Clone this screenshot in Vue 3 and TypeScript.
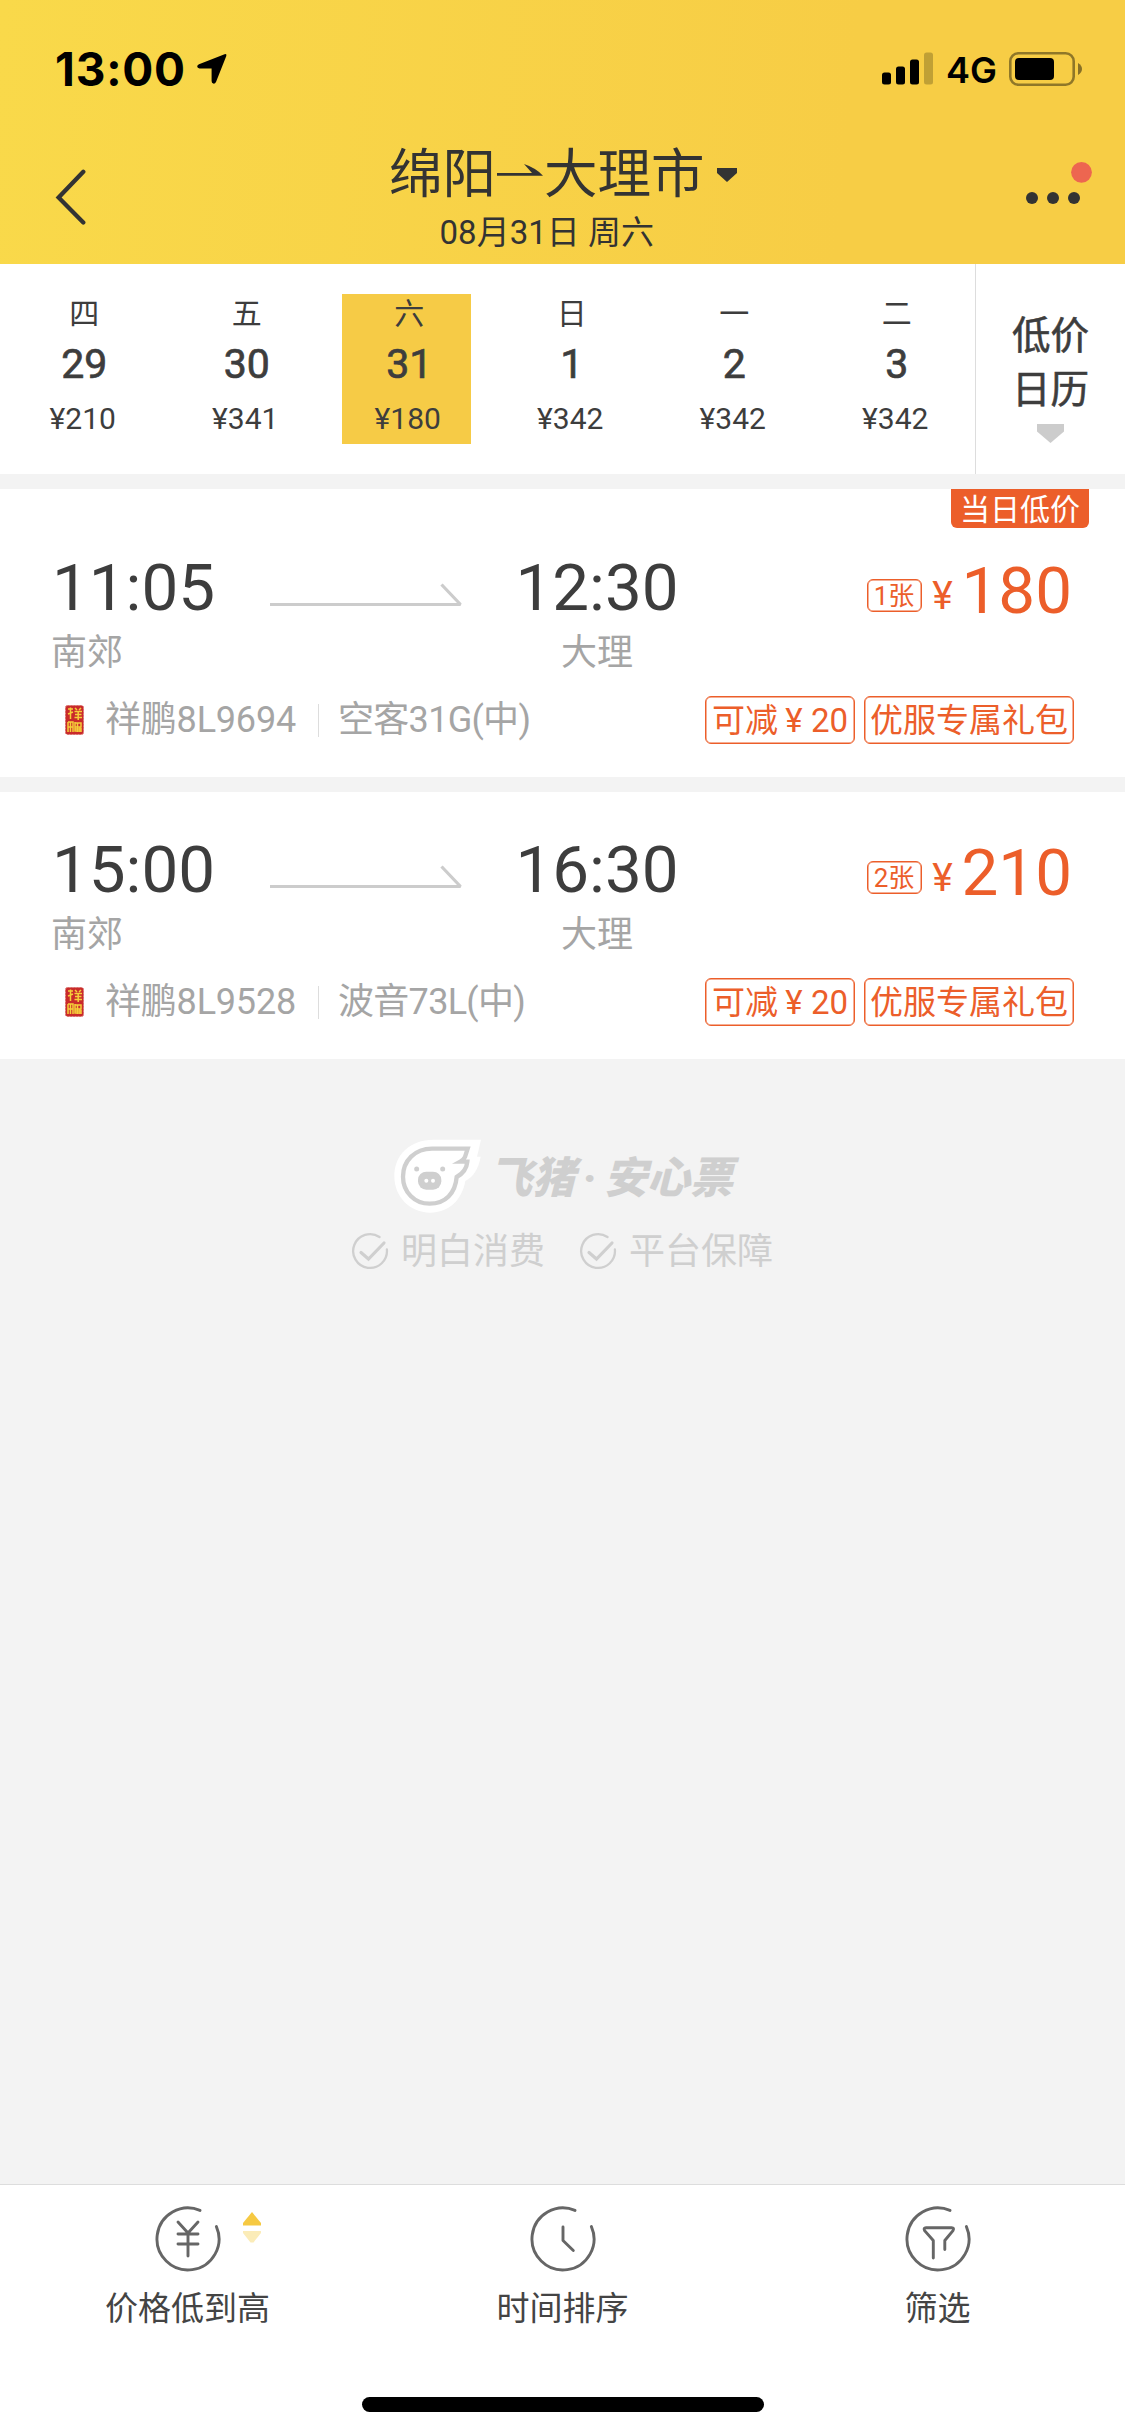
<script setup lang="ts">
interface Day {
  week: string
  date: string
  price: string
  active?: boolean
}
interface Flight {
  depart: string
  arrive: string
  from: string
  to: string
  code: string
  plane: string
  seats: string
  price: string
  badge?: string
}

const days: Day[] = [
  { week: '四', date: '29', price: '¥210' },
  { week: '五', date: '30', price: '¥341' },
  { week: '六', date: '31', price: '¥180', active: true },
  { week: '日', date: '1', price: '¥342' },
  { week: '一', date: '2', price: '¥342' },
  { week: '二', date: '3', price: '¥342' },
]

const flights: Flight[] = [
  { depart: '11:05', arrive: '12:30', from: '南郊', to: '大理', code: '祥鹏8L9694', plane: '空客31G(中)', seats: '1张', price: '180', badge: '当日低价' },
  { depart: '15:00', arrive: '16:30', from: '南郊', to: '大理', code: '祥鹏8L9528', plane: '波音73L(中)', seats: '2张', price: '210' },
]

const promises = ['明白消费', '平台保障']

const ring = 'M12 -28.6A31 31 0 1 0 28.4 -12.4'
const tabs = [
  { label: '价格低到高', glyph: 'M-10 -17L0 -6L10 -17M-10 -5H10M-10 5H10M0 -5V17', sort: true },
  { label: '时间排序', glyph: 'M0 -12V1.5L10.3 11.5', sort: false },
  { label: '筛选', glyph: 'M-4.7 19V1.5L-13.4 -8.4Q-14.8 -11.3 -12 -11.3H13.6Q16.6 -11.3 15 -8.4L6.8 1.5V10.5', sort: false },
]
</script>

<template>
  <div class="screen">
    <header class="header">
      <div class="status">
        <span class="clock">13:00</span>
        <svg class="locate" width="30" height="31" viewBox="0 0 30 31">
          <path d="M27.6 1.2Q30 .6 29.3 3L19 29Q18 31 16.300 30.600Q14.600 30.200 14.600 28V15.600H2.500Q.3 15.300 .2 13.600Q.2 12 2 11.200Z" />
        </svg>
        <svg class="signal" width="52" height="33" viewBox="0 0 52 33">
          <rect x="0" y="20.500" width="9" height="12" rx="2.500" />
          <rect x="14" y="14.500" width="9" height="18" rx="2.500" />
          <rect x="28" y="7.500" width="9" height="25" rx="2.500" />
          <rect x="42" y=".5" width="9" height="32" rx="2.500" opacity=".22" />
        </svg>
        <span class="net">4G</span>
        <svg class="battery" width="74" height="34" viewBox="0 0 74 34">
          <rect x="1.300" y="1.300" width="63.400" height="31.400" rx="8" fill="none" stroke="#000" stroke-opacity=".42" stroke-width="2.600" />
          <rect x="6" y="6" width="39" height="22" rx="4" />
          <path d="M69 11Q73 13.500 73 17Q73 20.500 69 23Z" opacity=".45" />
        </svg>
      </div>
      <div class="nav">
        <svg class="back" width="32" height="56" viewBox="0 0 32 56">
          <path d="M28.300 2.700L3.600 28.500L28.300 53.500" fill="none" stroke="#333" stroke-width="4.300" stroke-linecap="round" />
        </svg>
        <div class="heading">
          <div class="names">
            <h1 class="title">
              <span>绵阳</span>
              <svg width="46" height="14" viewBox="0 0 46 14">
                <path d="M0 9H35L27 0Q39 4 46 11.700H0Z" fill="#333" />
              </svg>
              <span>大理市</span>
            </h1>
            <p class="subtitle">08月31日 周六</p>
          </div>
          <svg class="caret" width="20" height="14" viewBox="0 0 20 14">
            <path d="M0 0H20V5L10 14L0 5Z" fill="#333" />
          </svg>
        </div>
        <svg class="more" width="70" height="46" viewBox="0 0 70 46">
          <circle cx="8" cy="37" r="6" fill="#333" />
          <circle cx="29" cy="37" r="6" fill="#333" />
          <circle cx="50" cy="37" r="6" fill="#333" />
          <circle cx="57.500" cy="11.300" r="10.400" fill="#ed6650" />
        </svg>
      </div>
    </header>

    <section class="dates">
      <div v-for="d in days" :key="d.date" class="col">
        <div class="day" :class="{ active: d.active }">
          <span class="week">{{ d.week }}</span>
          <span class="num">{{ d.date }}</span>
          <span class="fare">{{ d.price }}</span>
        </div>
      </div>
      <div class="calendar">
        <span>低价</span>
        <span>日历</span>
        <svg width="27" height="19" viewBox="0 0 27 19">
          <path d="M0 0H27V7.500L13.500 19L0 7.500Z" fill="#ccc" />
        </svg>
      </div>
    </section>

    <article v-for="f in flights" :key="f.code" class="card" :class="{ flagged: f.badge }">
      <span v-if="f.badge" class="flag">{{ f.badge }}</span>
      <div class="main">
        <div class="place from">
          <span class="time">{{ f.depart }}</span>
          <span class="city">{{ f.from }}</span>
        </div>
        <svg class="route" width="192" height="24" viewBox="0 0 192 24">
          <path d="M0 21.500H190.500L171.500 1.500" fill="none" stroke="#ccc" stroke-width="3.200" stroke-linejoin="bevel" />
        </svg>
        <div class="place to">
          <span class="time">{{ f.arrive }}</span>
          <span class="city">{{ f.to }}</span>
        </div>
        <div class="cost">
          <span class="seats">{{ f.seats }}</span>
          <span class="yen">¥</span>
          <span class="amount">{{ f.price }}</span>
        </div>
      </div>
      <div class="info">
        <svg class="airline" width="19" height="30" viewBox="0 0 19 30">
          <rect x=".5" y=".5" width="18" height="29" rx="2" fill="#c92a2b" stroke="#d9706c" stroke-dasharray="2 1" />
          <path d="M3 4H8M5.500 2.500V14M3 9L8 7M10 3L12 5M16 3L14 5M9.500 6.500H17M10 9.500H16.500M9.500 12.500H17M13.200 6.500V15M3 17V27M3 17H8V27M5.500 17V27M3 22H8M10 17V26H17M10 18H16V22H10M12.500 18V27M15 22V27M10 24H17" fill="none" stroke="#f5cf3a" stroke-width="1.500" />
        </svg>
        <span class="code">{{ f.code }}</span>
        <i class="bar"></i>
        <span class="plane">{{ f.plane }}</span>
        <span class="tag coupon">可减<b>¥</b>20</span>
        <span class="tag">优服专属礼包</span>
      </div>
    </article>

    <section class="brand">
      <div class="logo">
        <svg width="87" height="74" viewBox="162 58 261 222">
          <path d="M280 60H423L411 111H422C416 146 400 172 376 184C366 240 328 279 270 279C210 279 163 232 163 170C163 105 210 60 280 60Z" fill="#fff" />
          <path d="M276 87H383L375 112Q370 121 361 126H382C380 146 368 162 350 172C346 221 316 252 269 252C224 252 189 217 189 171C189 123 225 87 276 87Z" fill="none" stroke="#cfcfcf" stroke-width="13" />
          <rect x="234" y="156" width="70" height="54" rx="25" fill="#cfcfcf" />
          <circle cx="259" cy="183" r="6" fill="#fff" />
          <circle cx="279" cy="183" r="6" fill="#fff" />
          <circle cx="230" cy="148" r="7.500" fill="#cfcfcf" />
          <circle cx="308" cy="148" r="7.500" fill="#cfcfcf" />
        </svg>
        <span class="name">飞猪<i>·</i>安心票</span>
      </div>
      <div class="promises">
        <div v-for="p in promises" :key="p" class="promise">
          <svg width="38" height="38" viewBox="-19 -19 38 38" fill="none" stroke="#cfcfcf" stroke-linecap="round">
            <path d="M9.500 -14A16.900 16.900 0 1 0 16.900 -1.500" stroke-width="2.300" />
            <path d="M-9 1.500L-1.500 8L14 -8" stroke-width="3.200" />
          </svg>
          <span>{{ p }}</span>
        </div>
      </div>
    </section>

    <footer class="footer">
      <div class="tabs">
        <div v-for="t in tabs" :key="t.label" class="tab">
          <div class="icon">
            <svg width="66" height="66" viewBox="-33 -33 66 66" fill="none" stroke="#666" stroke-width="2.900" stroke-linecap="round" stroke-linejoin="round">
              <path :d="ring" />
              <path :d="t.glyph" />
            </svg>
            <svg v-if="t.sort" class="sort" width="18" height="31" viewBox="0 0 18 31">
              <path d="M9 0L18 11V13.500H0V11Z" fill="#f6c942" />
              <path d="M0 19H18V21L10.500 30.500H7.500L0 21Z" fill="#fbecb8" />
            </svg>
          </div>
          <span class="label">{{ t.label }}</span>
        </div>
      </div>
      <div class="home"></div>
    </footer>
  </div>
</template>

<style>
body {
  margin: 0;
  background: #f3f3f3;
}
</style>

<style scoped>
.screen {
  width: 1125px;
  height: 2436px;
  display: flex;
  flex-direction: column;
  background: #f3f3f3;
  color: #3d3d3d;
  font-family: Roboto, "Noto Sans CJK SC", sans-serif;
  font-kerning: none;
  overflow: hidden;
}
svg {
  display: block;
  flex: none;
}
.header {
  height: 264px;
  flex: none;
  background: linear-gradient(95deg, #f9d94a 0%, #f7cd45 75%, #f7cd45 100%);
}
.status {
  height: 142px;
  display: flex;
  align-items: flex-start;
  font-family: Inter, sans-serif;
  color: #000;
}
.clock {
  width: 142px;
  margin: 42px 0 0 55px;
  font-size: 46px;
  line-height: 54px;
  font-weight: 700;
  letter-spacing: 0.8px;
}
.locate {
  margin-top: 53px;
}
.signal {
  margin: 52px 0 0 655px;
}
.net {
  width: 63px;
  margin: 48px 0 0 12px;
  font-size: 36px;
  line-height: 44px;
  font-weight: 600;
}
.battery {
  margin-top: 52px;
}
.nav {
  display: flex;
  align-items: flex-start;
}
.back {
  margin: 27px 0 0 55px;
}
.heading {
  display: flex;
  margin-left: 302px;
  width: 635px;
}
.title {
  margin: 1px 0 0;
  display: flex;
  align-items: center;
  font-size: 53.500px;
  line-height: 64px;
  font-weight: 400;
  color: #333;
}
.title svg {
  margin: 0 1px 8px;
}
.subtitle {
  margin: 1px 0 0;
  text-align: center;
  font-size: 33px;
  line-height: 50px;
  color: #333;
}
.caret {
  margin: 26px 0 0 12px;
}
.more {
  margin-top: 19px;
}
.dates {
  height: 210px;
  flex: none;
  display: flex;
  background: #fff;
}
.col {
  width: 162.500px;
  display: flex;
  justify-content: center;
}
.day {
  width: 126px;
  height: 150px;
  margin-top: 30px;
  padding-left: 3px;
  display: flex;
  flex-direction: column;
  align-items: center;
}
.day.active {
  background: #f6cb46;
}
.week {
  padding-left: 3px;
  font-size: 30px;
  line-height: 40px;
}
.num {
  padding-left: 3px;
  font-size: 41px;
  line-height: 60px;
  -webkit-text-stroke: 0.700px #3d3d3d;
}
.fare {
  font-size: 30px;
  line-height: 50px;
}
.calendar {
  flex: 1;
  display: flex;
  flex-direction: column;
  align-items: center;
  border-left: 1px solid #ddd;
  padding-top: 45px;
  font-size: 38.500px;
  line-height: 54px;
  -webkit-text-stroke: 0.600px #3d3d3d;
}
.calendar svg {
  margin-top: 7px;
}
.card {
  position: relative;
  flex: none;
  margin-top: 15px;
  padding: 44px 51px 33px;
  background: #fff;
}
.card.flagged {
  padding-top: 65px;
}
.flag {
  position: absolute;
  top: 0;
  right: 36px;
  width: 138px;
  height: 39px;
  border-radius: 0 0 6px 6px;
  background: #ec5e2a;
  color: #fff;
  font-size: 30px;
  line-height: 42px;
  text-align: center;
}
.main {
  display: flex;
  align-items: flex-start;
}
.place {
  display: flex;
  flex-direction: column;
}
.from {
  width: 219px;
}
.to {
  width: 164px;
  margin-left: 53px;
  align-items: center;
}
.time {
  font-size: 65.500px;
  line-height: 67px;
}
.from .time {
  padding-left: 1px;
}
.city {
  margin-top: 7px;
  margin-bottom: -1px;
  font-size: 36px;
  line-height: 50px;
  color: #a5a5a5;
}
.route {
  margin-top: 29px;
}
.cost {
  display: flex;
  align-items: flex-start;
  margin-left: auto;
  margin-right: 2px;
  color: #ec5e2a;
}
.seats {
  box-sizing: border-box;
  width: 55px;
  height: 33px;
  margin: 25px 2px 0 0;
  border: 1px solid #ec5e2a;
  box-shadow: inset 0 0 0 0.500px #ec5e2a;
  border-radius: 6px;
  font-size: 26px;
  line-height: 33px;
  text-align: center;
}
.yen {
  width: 38px;
  margin-top: 22px;
  font-size: 39px;
  line-height: 40px;
  text-align: center;
}
.amount {
  margin-top: 3px;
  font-size: 65.500px;
  line-height: 67px;
}
.info {
  display: flex;
  align-items: center;
  height: 48px;
  margin-top: 19px;
  font-size: 36px;
  line-height: 48px;
  color: #a5a5a5;
}
.airline {
  margin-left: 14px;
}
.code {
  width: 213px;
  margin-left: 21px;
  letter-spacing: -0.200px;
}
.bar {
  width: 1px;
  height: 33px;
  background: #ddd;
}
.plane {
  margin: 0 auto 0 19px;
  letter-spacing: -0.700px;
}
.tag {
  box-sizing: border-box;
  height: 48px;
  margin-left: 9px;
  padding: 0 5px;
  border: 1px solid #ec5e2a;
  box-shadow: inset 0 0 0 0.500px #ec5e2a;
  border-radius: 6px;
  font-size: 33px;
  line-height: 48px;
  color: #ec5e2a;
}
.coupon {
  padding: 0 6px;
}
.tag b {
  display: inline-block;
  width: 32px;
  margin-right: 1px;
  text-align: center;
  font-weight: 400;
}
.brand {
  flex: 1;
  display: flex;
  flex-direction: column;
  padding-top: 80px;
  color: #cfcfcf;
}
.logo {
  display: flex;
  margin-left: 394px;
}
.name {
  margin-left: 8px;
  font-size: 43px;
  line-height: 78px;
  height: 77px;
  font-weight: 900;
  font-style: italic;
  white-space: nowrap;
}
.name i {
  display: inline-block;
  width: 29px;
  text-align: center;
}
.promises {
  display: flex;
  gap: 35px;
  margin: 11px 0 0 351px;
}
.promise {
  display: flex;
  align-items: center;
  gap: 12px;
  width: 193px;
  font-size: 36px;
  line-height: 50px;
  white-space: nowrap;
}
.promise svg {
  margin-bottom: 3px;
}
.footer {
  box-sizing: border-box;
  height: 252px;
  flex: none;
  border-top: 1px solid #ddd;
  background: #fff;
}
.tabs {
  display: flex;
  height: 212px;
}
.tab {
  flex: 1;
  display: flex;
  flex-direction: column;
  align-items: center;
  padding-top: 21px;
}
.icon {
  position: relative;
}
.sort {
  position: absolute;
  left: 88px;
  top: 6px;
}
.label {
  margin-top: 12px;
  font-size: 33px;
  line-height: 50px;
  color: #444;
}
.home {
  width: 402px;
  height: 15px;
  margin: 0 auto;
  border-radius: 8px;
  background: #000;
}
</style>
